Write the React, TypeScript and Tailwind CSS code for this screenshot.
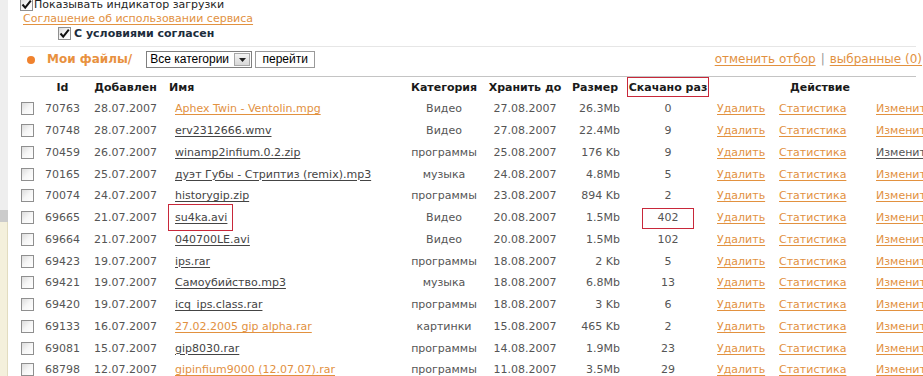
import React from "react";

type Row = {
  id: string;
  added: string;
  name: string;
  hot?: boolean;
  cat: string;
  until: string;
  size: string;
  dl: string;
  editVisited?: boolean;
  markName?: boolean;
  markDl?: boolean;
};

const rows: Row[] = [
  { id: "70763", added: "28.07.2007", name: "Aphex Twin - Ventolin.mpg", hot: true, cat: "Видео", until: "27.08.2007", size: "26.3Mb", dl: "0" },
  { id: "70748", added: "28.07.2007", name: "erv2312666.wmv", cat: "Видео", until: "27.08.2007", size: "22.4Mb", dl: "9" },
  { id: "70459", added: "26.07.2007", name: "winamp2infium.0.2.zip", cat: "программы", until: "25.08.2007", size: "176 Kb", dl: "9", editVisited: true },
  { id: "70165", added: "25.07.2007", name: "дуэт Губы - Стриптиз (remix).mp3", cat: "музыка", until: "24.08.2007", size: "4.8Mb", dl: "5" },
  { id: "70074", added: "24.07.2007", name: "historygip.zip", cat: "программы", until: "23.08.2007", size: "894 Kb", dl: "2" },
  { id: "69665", added: "21.07.2007", name: "su4ka.avi", cat: "Видео", until: "20.08.2007", size: "1.5Mb", dl: "402", markName: true, markDl: true },
  { id: "69664", added: "21.07.2007", name: "040700LE.avi", cat: "Видео", until: "20.08.2007", size: "1.5Mb", dl: "102" },
  { id: "69423", added: "19.07.2007", name: "ips.rar", cat: "программы", until: "18.08.2007", size: "2 Kb", dl: "5" },
  { id: "69421", added: "19.07.2007", name: "Самоубийство.mp3", cat: "музыка", until: "18.08.2007", size: "6.8Mb", dl: "13" },
  { id: "69420", added: "19.07.2007", name: "icq_ips.class.rar", cat: "программы", until: "18.08.2007", size: "3 Kb", dl: "6" },
  { id: "69133", added: "16.07.2007", name: "27.02.2005 gip alpha.rar", hot: true, cat: "картинки", until: "15.08.2007", size: "465 Kb", dl: "2" },
  { id: "69081", added: "15.07.2007", name: "gip8030.rar", cat: "программы", until: "14.08.2007", size: "1.9Mb", dl: "23" },
  { id: "68798", added: "12.07.2007", name: "gipinfium9000 (12.07.07).rar", hot: true, cat: "программы", until: "11.08.2007", size: "3.5Mb", dl: "29" },
];

function Box({ checked }: { checked?: boolean }) {
  return (
    <span className="inline-flex h-[13px] w-[13px] shrink-0 items-center justify-center border border-[#8f8f8f] bg-gradient-to-br from-[#dcdcdc] via-[#f6f6f6] to-white">
      {checked && (
        <svg width="11" height="11" viewBox="0 0 11 11">
          <path d="M1.5 5.5 L4.2 8.6 L9.8 1.6" fill="none" stroke="#111" strokeWidth="2" />
        </svg>
      )}
    </span>
  );
}

const link = "underline underline-offset-[2px] text-[#e2913f] decoration-[#e2913f]";

export default function App() {
  return (
    <div className="flex h-[376px] w-[923px] overflow-hidden bg-white font-['DejaVu_Sans',Verdana,sans-serif] text-[11px] leading-[13px] text-[#555]">
      <div className="flex w-[8px] shrink-0 flex-col">
        <div className="h-[210px] bg-[#eeeeee]" />
        <div className="h-[12px] bg-[#cbcbcb]" />
        <div className="flex-1 border-r border-[#e2dcc0] bg-[#f4f0dc]" />
      </div>

      <div className="w-[908px] shrink-0 pl-[12px]">
        <div className="-mt-[3px]">
          <div className="flex h-[14px] items-center gap-[1px] text-[#1e1e1e]">
            <Box checked />
            <span>Показывать индикатор загрузки</span>
          </div>
          <div className="flex h-[15px] items-center pl-[3px]">
            <a className={link}>Соглашение об использовании сервиса</a>
          </div>
          <div className="flex h-[14px] items-center gap-[3px] pl-[38px] font-bold text-[#1d2d3c]">
            <Box checked />
            <span>С условиями согласен</span>
          </div>
        </div>

        <div className="mt-[6px] h-px bg-[#e6e6e6]" />

        <div className="flex h-[25px] items-center">
          <span className="ml-[7px] h-[8px] w-[8px] rounded-full bg-[#f0822e]" />
          <span className="ml-[12px] text-[12px] font-bold text-[#e8913f]">Мои файлы/</span>
          <div className="ml-[14px] flex h-[17px] w-[106px] items-center justify-between border border-[#7f7f7f] bg-white pl-[3px] pr-[1px] font-['Liberation_Sans',Arial,sans-serif] text-[12px] text-black">
            <span>Все категории</span>
            <span className="flex h-[13px] w-[16px] items-center justify-center border border-[#a8a8a8] bg-gradient-to-b from-[#f4f4f4] to-[#d8d8d8]">
              <svg width="7" height="4" viewBox="0 0 7 4">
                <path d="M0 0 H7 L3.5 4 Z" fill="#222" />
              </svg>
            </span>
          </div>
          <button className="ml-[3px] flex h-[17px] w-[60px] items-center justify-center border border-[#9a9a9a] bg-white font-['Liberation_Sans',Arial,sans-serif] text-[12px] text-black">
            перейти
          </button>
          <div className="-mr-[6px] ml-auto flex items-center gap-[5px] whitespace-nowrap text-[12px]">
            <a className={link}>отменить отбор</a>
            <span className="text-[#999]">|</span>
            <a className={link}>выбранные (0)</a>
          </div>
        </div>

        <div className="mt-[4px] h-px bg-[#c4c4c4]" />

        <table className="w-[908px] table-fixed border-collapse">
          <colgroup>
            <col className="w-[20px]" />
            <col className="w-[45px]" />
            <col className="w-[81px]" />
            <col className="w-[238px]" />
            <col className="w-[80px]" />
            <col className="w-[82px]" />
            <col className="w-[58px]" />
            <col className="w-[88px]" />
            <col className="w-[216px]" />
          </colgroup>
          <thead>
            <tr className="h-[21px] font-bold text-[#1a1a1a]">
              <th />
              <th className="text-center">Id</th>
              <th className="text-center">Добавлен</th>
              <th className="pl-[3px] text-left">Имя</th>
              <th className="text-center">Категория</th>
              <th className="whitespace-nowrap text-center">Хранить до</th>
              <th className="text-center">Размер</th>
              <th className="text-center">
                <span className="relative inline-block whitespace-nowrap">
                  Скачано раз
                  <span className="absolute -bottom-[3px] -left-[2px] -right-[2px] -top-[4px] border border-[#c8283a]" />
                </span>
              </th>
              <th className="text-center">Действие</th>
            </tr>
          </thead>
          <tbody>
            {rows.map((r) => (
              <tr key={r.id} className="h-[21.75px]">
                <td className="pl-[1px] align-middle">
                  <span className="flex">
                    <Box />
                  </span>
                </td>
                <td className="text-center">{r.id}</td>
                <td className="text-center">{r.added}</td>
                <td className="whitespace-nowrap pl-[9px]">
                  <span className="relative inline-block">
                    <a
                      className={
                        r.hot
                          ? link
                          : "text-[#444] underline underline-offset-[2px] decoration-[#444]"
                      }
                    >
                      {r.name}
                    </a>
                    {r.markName && (
                      <span className="absolute -bottom-[7px] -left-[7px] -right-[6px] -top-[7px] border border-[#c8283a]" />
                    )}
                  </span>
                </td>
                <td className="text-center">{r.cat}</td>
                <td className="text-center">{r.until}</td>
                <td className="pr-[4px] text-right">{r.size}</td>
                <td className="text-center">
                  <span className="relative inline-block">
                    {r.dl}
                    {r.markDl && (
                      <span className="absolute -bottom-[5px] -left-[16px] -right-[15px] -top-[3px] border border-[#c8283a]" />
                    )}
                  </span>
                </td>
                <td className="whitespace-nowrap pl-[5px]">
                  <span className="inline-block w-[62px]">
                    <a className={link}>Удалить</a>
                  </span>
                  <span className="inline-block w-[97px]">
                    <a className={link}>Статистика</a>
                  </span>
                  <a
                    className={
                      r.editVisited
                        ? "text-[#555] underline underline-offset-[2px] decoration-[#555]"
                        : link
                    }
                  >
                    Изменить
                  </a>
                </td>
              </tr>
            ))}
          </tbody>
        </table>
      </div>
    </div>
  );
}
